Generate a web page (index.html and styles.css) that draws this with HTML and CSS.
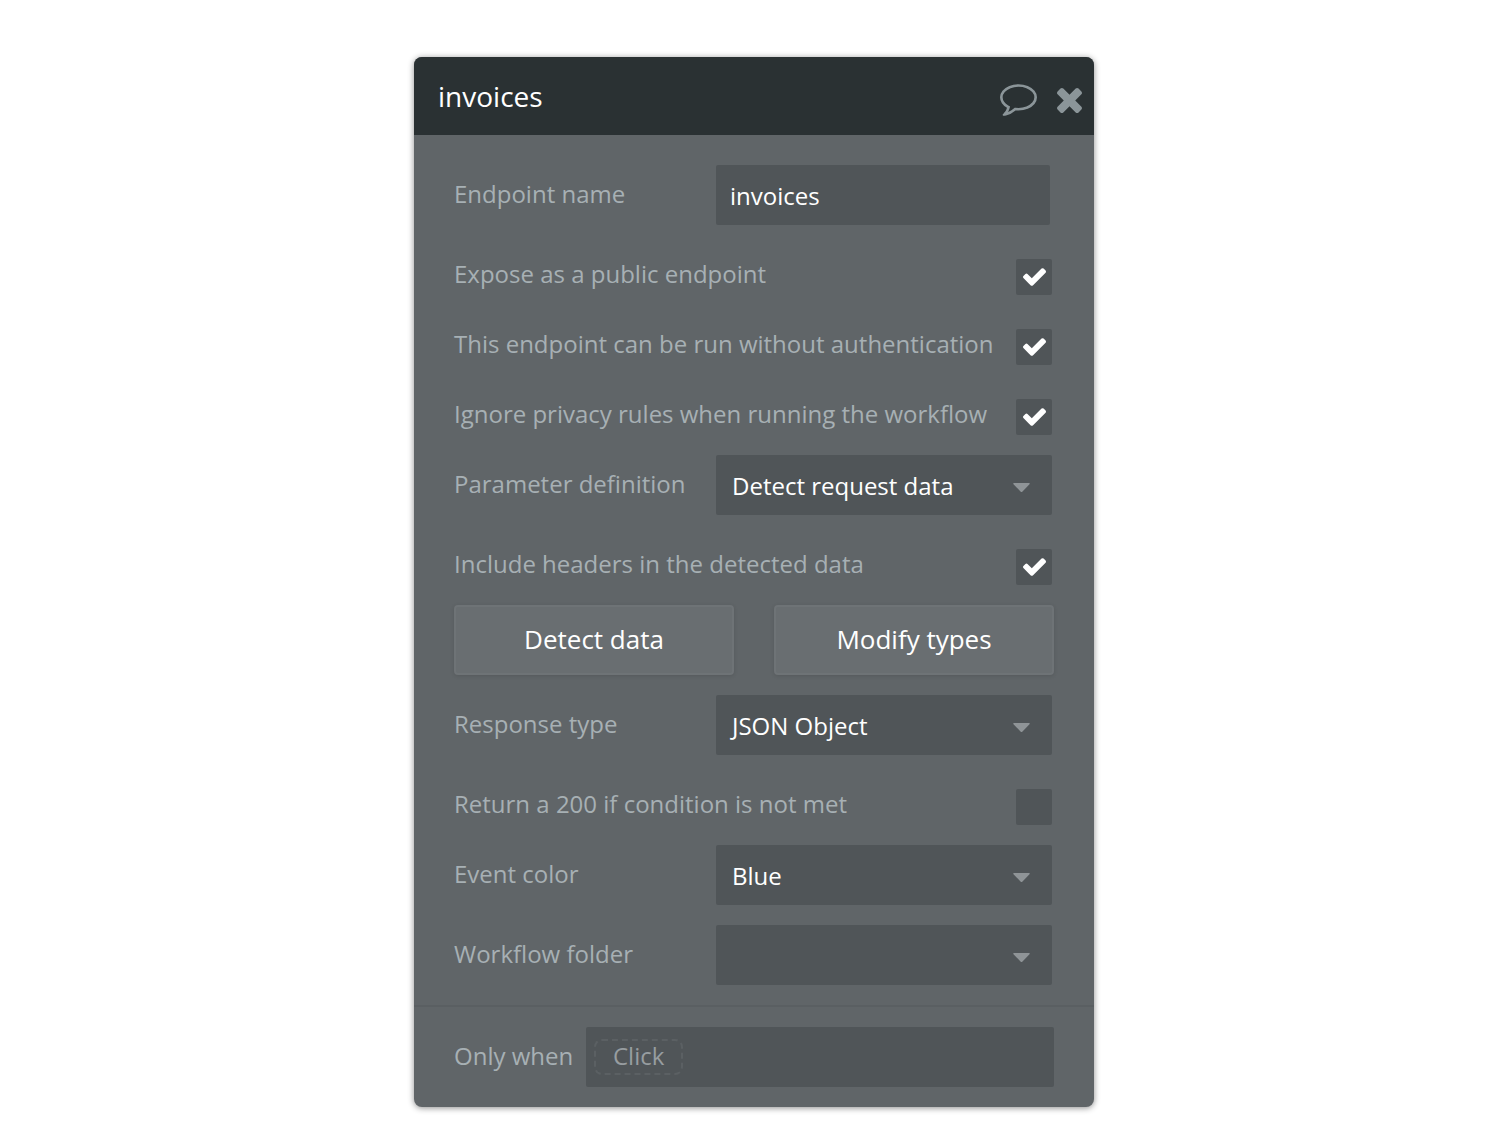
FILE: index.html
```html
<!DOCTYPE html>
<html lang="en">
<head>
  <meta charset="UTF-8">
  <title>invoices</title>
  <meta name="viewport" content="width=device-width, initial-scale=1.0">
  <link rel="stylesheet" href="styles.css">
</head>
<body>
  <div class="panel">
    <div class="panel-header">
      <h1 class="title">invoices</h1>
      <button type="button" class="icon-btn" aria-label="Comment">
        <svg class="icon-comment" viewBox="0 256 1792 1536" fill="currentColor">
          <path d="M896 384q-204 0-381.500 69.500t-282 187.500-104.500 255q0 112 71.500 213.500t201.500 175.500l87 50-27 96q-24 91-70 172 152-63 275-171l43-38 57 6q69 8 130 8 204 0 381.500-69.500t282-187.500 104.500-255-104.500-255-282-187.500-381.500-69.500zm896 512q0 174-120 321.500t-326 233-450 85.500q-70 0-145-8-198 175-460 242-49 14-114 22h-5q-15 0-27-10.500t-16-27.500v-1q-3-4-.5-12t2-10 4.500-9.500l6-9 7-8.500 8-9q7-8 31-34.500t34.500-38 31-39.500 32.500-51 27-59 26-76q-157-89-247.500-220t-90.500-281q0-174 120-321.500t326-233 450-85.500 450 85.500 326 233 120 321.500z"/>
        </svg>
      </button>
      <button type="button" class="icon-btn" aria-label="Close">
        <svg class="icon-close" viewBox="302 366 1188 1188" fill="currentColor">
          <path d="M1490 1322q0 40-28 68l-136 136q-28 28-68 28t-68-28l-294-294-294 294q-28 28-68 28t-68-28l-136-136q-28-28-28-68t28-68l294-294-294-294q-28-28-28-68t28-68l136-136q28-28 68-28t68 28l294 294 294-294q28-28 68-28t68 28l136 136q28 28 28 68t-28 68l-294 294 294 294q28 28 28 68z"/>
        </svg>
      </button>
    </div>

    <!-- Shared icons -->
    <svg class="sprite" aria-hidden="true">
      <symbol id="check" viewBox="121 334 1550 1188">
        <path d="M1671 566q0 40-28 68l-724 724-136 136q-28 28-68 28t-68-28l-136-136-362-362q-28-28-28-68t28-68l136-136q28-28 68-28t68 28l294 295 656-657q28-28 68-28t68 28l136 136q28 28 28 68z"/>
      </symbol>
      <symbol id="caret" viewBox="0 0 17 9">
        <path d="M1 0h15q1.500 0 .5 1.200l-7 7.300q-1 1-2 0l-7-7.300q-1-1.200.5-1.200z"/>
      </symbol>
    </svg>

    <form id="endpointForm">
      <div class="panel-content">
        <div class="row">
          <label for="name">Endpoint name</label>
          <input type="text" class="field name-field" id="name" name="name" value="invoices">
        </div>
        <div class="row row-check">
          <label for="public">Expose as a public endpoint</label>
          <span class="stack">
            <input type="checkbox" class="checkbox" id="public" name="public" checked>
            <svg class="check"><use href="#check"/></svg>
          </span>
        </div>
        <div class="row row-check">
          <label for="noauth">This endpoint can be run without authentication</label>
          <span class="stack">
            <input type="checkbox" class="checkbox" id="noauth" name="noauth" checked>
            <svg class="check"><use href="#check"/></svg>
          </span>
        </div>
        <div class="row row-check">
          <label for="privacy">Ignore privacy rules when running the workflow</label>
          <span class="stack">
            <input type="checkbox" class="checkbox" id="privacy" name="privacy" checked>
            <svg class="check"><use href="#check"/></svg>
          </span>
        </div>
        <div class="row">
          <label for="parameters">Parameter definition</label>
          <span class="stack">
            <select class="field select" id="parameters" name="parameters">
              <option>Detect request data</option>
            </select>
            <svg class="caret"><use href="#caret"/></svg>
          </span>
        </div>
        <div class="row row-check">
          <label for="headers">Include headers in the detected data</label>
          <span class="stack">
            <input type="checkbox" class="checkbox" id="headers" name="headers" checked>
            <svg class="check"><use href="#check"/></svg>
          </span>
        </div>
        <div class="buttons">
          <button type="button" class="btn">Detect data</button>
          <button type="button" class="btn">Modify types</button>
        </div>
        <div class="row">
          <label for="response">Response type</label>
          <span class="stack">
            <select class="field select" id="response" name="response">
              <option>JSON Object</option>
            </select>
            <svg class="caret"><use href="#caret"/></svg>
          </span>
        </div>
        <div class="row row-check">
          <label for="return200">Return a 200 if condition is not met</label>
          <span class="stack">
            <input type="checkbox" class="checkbox" id="return200" name="return200">
            <svg class="check"><use href="#check"/></svg>
          </span>
        </div>
        <div class="row">
          <label for="color">Event color</label>
          <span class="stack">
            <select class="field select" id="color" name="color">
              <option>Blue</option>
            </select>
            <svg class="caret"><use href="#caret"/></svg>
          </span>
        </div>
        <div class="row">
          <label for="folder">Workflow folder</label>
          <span class="stack">
            <select class="field select" id="folder" name="folder">
              <option></option>
            </select>
            <svg class="caret"><use href="#caret"/></svg>
          </span>
        </div>
      </div>
      <div class="panel-footer">
        <label for="condition">Only when</label>
        <div class="condition">
          <button type="button" class="chip" id="condition">Click</button>
        </div>
      </div>
    </form>
  </div>
</body>
</html>
```
FILE: styles.css
```css
* {
  box-sizing: border-box;
}
body {
  margin: 0;
  padding: 57px 28px 24px 24px;
  background-color: #ffffff;
  font-family: "Open Sans", sans-serif;
  font-size: 24px;
}
button, input, select {
  font: inherit;
  margin: 0;
}
.panel {
  max-width: 680px;
  margin: 0 auto;
  background-color: #606568;
  border-radius: 8px;
  box-shadow: 0 1px 6px rgba(0, 0, 0, 0.45);
  overflow: hidden;
}
.panel-header {
  display: flex;
  align-items: center;
  gap: 20px;
  height: 78px;
  padding: 8px 12px 0 24px;
  background-color: #2a3133;
}
.title {
  flex: 1;
  margin: 0 0 8px;
  font-size: 28px;
  line-height: 36px;
  font-weight: 400;
  color: #ffffff;
}
.icon-btn {
  display: flex;
  padding: 0;
  border: none;
  background: none;
  color: #8b9599;
  cursor: pointer;
}
.icon-comment {
  width: 37px;
  height: 32px;
}
.icon-close {
  width: 25px;
  height: 25px;
}
.sprite {
  display: none;
}
.panel-content {
  padding: 30px 40px 0;
}
.row {
  display: flex;
  align-items: center;
  justify-content: space-between;
  height: 60px;
  margin-bottom: 20px;
  padding-right: 2px;
}
.row-check {
  margin-bottom: 10px;
}
label {
  padding-bottom: 4px;
  color: #a7b0b4;
  white-space: nowrap;
}
.field {
  width: 336px;
  height: 60px;
  padding: 0 14px;
  border: none;
  border-radius: 2px;
  background-color: #505558;
  color: #ffffff;
  outline: none;
  appearance: none;
}
.name-field {
  width: 334px;
  margin-right: 2px;
}
/* indent instead of padding, so the tail of a J is not clipped */
.select {
  padding-left: 8px;
  text-indent: 8px;
}
/* control and its icon share one grid cell */
.stack {
  display: grid;
  align-items: center;
}
.stack > * {
  grid-area: 1 / 1;
}
.stack svg {
  margin-top: 4px;
  pointer-events: none;
}
.caret {
  width: 17px;
  height: 9px;
  margin-right: 22px;
  justify-self: end;
  fill: #8f9497;
}
.checkbox {
  width: 36px;
  height: 36px;
  margin-top: 4px;
  border-radius: 2px;
  background-color: #505558;
  appearance: none;
}
.check {
  display: none;
  width: 23px;
  height: 18px;
  justify-self: center;
  fill: #ffffff;
}
.checkbox:checked + .check {
  display: block;
}
.buttons {
  display: grid;
  grid-template-columns: 1fr 1fr;
  gap: 40px;
  margin-bottom: 20px;
}
.btn {
  height: 70px;
  padding: 0 0 2px;
  border: 2px solid #6e7376;
  border-radius: 4px;
  background-color: #696e71;
  box-shadow: 0 1px 4px rgba(0, 0, 0, 0.12);
  color: #ffffff;
  font-size: 26px;
  cursor: pointer;
}
.panel-footer {
  display: flex;
  align-items: center;
  justify-content: space-between;
  padding: 20px 40px;
  border-top: 2px solid #5a5f62;
}
.condition {
  display: flex;
  align-items: center;
  width: 468px;
  height: 60px;
  padding: 0 8px;
  border-radius: 2px;
  background-color: #505558;
}
.chip {
  display: flex;
  align-items: center;
  height: 36px;
  padding: 0 17px 4px;
  border: 2px dashed #5b6063;
  border-radius: 8px;
  background: none;
  color: #979da0;
  cursor: pointer;
}
```
